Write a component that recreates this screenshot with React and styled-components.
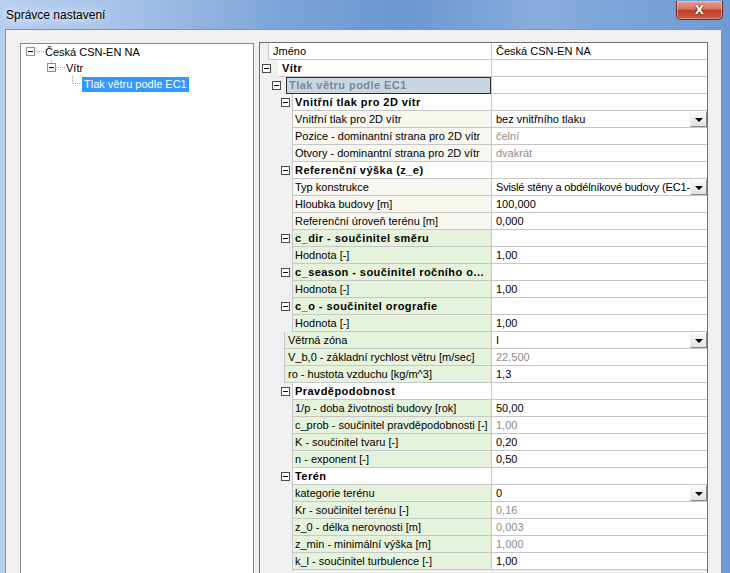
import React from "react";
import styled, { createGlobalStyle } from "styled-components";

const GlobalStyle = createGlobalStyle`
  html, body {
    margin: 0;
    padding: 0;
    overflow: hidden;
  }
  body {
    font-family: "Liberation Sans", Arial, sans-serif;
    font-size: 11px;
    color: #000;
  }
`;

const LINE = "#c6c6c6";
const TONES = {
  white: "#ffffff",
  cream: "#f8f8f0",
  green: "#e6f3dc",
};

const Frame = styled.div`
  width: 730px;
  height: 573px;
  display: flex;
  flex-direction: column;
  overflow: hidden;
  background: linear-gradient(
    90deg,
    #b7cfee 0%,
    #a8c3e8 16%,
    #7ea5d8 38%,
    #6c97d0 55%,
    #88acdc 74%,
    #6f9ad2 100%
  );
`;

const TitleBar = styled.div`
  height: 29px;
  flex: none;
  display: flex;
  align-items: flex-start;
`;

const Title = styled.div`
  margin: 8px 0 0 6px;
  font-size: 12px;
  line-height: 14px;
  text-shadow: 0 0 6px #fff, 0 0 12px rgba(255, 255, 255, 0.9);
`;

const CloseButton = styled.div`
  margin: 1px 7px 0 auto;
  width: 47px;
  height: 19px;
  box-sizing: border-box;
  display: flex;
  align-items: center;
  justify-content: center;
  border: 1px solid #6e2b22;
  border-top: none;
  border-radius: 0 0 5px 5px;
  background: linear-gradient(#e7a394 0%, #d7735f 45%, #c13f27 52%, #cf5a40 100%);
  box-shadow: inset 0 0 0 1px rgba(255, 255, 255, 0.35);
  color: #fff;
  font-family: "DejaVu Sans", sans-serif;
  font-weight: 700;
  font-size: 12px;
  text-shadow: 0 0 2px #5a1208, 0 0 1px #5a1208;
`;

const Client = styled.div`
  flex: 1;
  min-height: 0;
  display: flex;
  align-items: flex-start;
  gap: 5px;
  margin: 0 8px 0 5px;
  padding: 12px 13px 0 14px;
  background: #f0f0f0;
  border: 1px solid #7f93b0;
  border-bottom: none;
`;

const TreePanel = styled.div`
  width: 234px;
  height: 560px;
  flex: none;
  box-sizing: border-box;
  margin-top: 1px;
  background: #fff;
  border: 1px solid #828790;
`;

const TreeRow = styled.div`
  display: flex;
  align-items: center;
  height: 16px;
  padding-left: ${(p) => p.$indent}px;
`;

const TreeLines = styled.svg`
  flex: none;
  display: block;
`;

const TreeLabel = styled.span`
  white-space: nowrap;
  line-height: 15px;
  padding: 0 2px;
  margin-left: ${(p) => (p.$selected ? 0 : -2)}px;
  background: ${(p) => (p.$selected ? "#3399ff" : "transparent")};
  color: ${(p) => (p.$selected ? "#fff" : "#000")};
`;

const Grid = styled.div`
  width: 449px;
  height: 560px;
  flex: none;
  box-sizing: border-box;
  background: #f0f0f0;
  border: 1px solid #6f6f6f;
`;

const Row = styled.div`
  display: flex;
  height: 17px;
`;

const Gutter = styled.div`
  flex: none;
  width: ${(p) => p.$width}px;
  box-sizing: border-box;
  display: flex;
  align-items: center;
  padding-left: ${(p) => p.$box}px;
  background: #f0f0f0;
`;

const Expander = styled.span`
  position: relative;
  width: 9px;
  height: 9px;
  box-sizing: border-box;
  border: 1px solid #4a4a4a;
  background: #fff;
  margin-top: -1px;
  &::after {
    content: "";
    position: absolute;
    left: 1px;
    top: 3px;
    width: 5px;
    height: 1px;
    background: #000;
  }
`;

const LabelCell = styled.div`
  flex: 1;
  min-width: 0;
  box-sizing: border-box;
  padding-left: ${(p) => p.$pad}px;
  line-height: 16px;
  white-space: nowrap;
  overflow: hidden;
  background: ${(p) => TONES[p.$tone]};
  border-left: 1px solid ${(p) => (p.$edge ? LINE : "transparent")};
  border-bottom: 1px solid ${LINE};
  font-weight: ${(p) => (p.$bold ? 700 : 400)};
  letter-spacing: ${(p) => (p.$bold ? "0.45px" : "0")};
`;

const SelectedCell = styled(LabelCell)`
  background: #c9d6e1;
  color: #7b8895;
  border: 1px solid #2e2e2e;
  line-height: 15px;
`;

const ValueCell = styled.div`
  flex: none;
  width: 216px;
  box-sizing: border-box;
  display: flex;
  align-items: center;
  background: #fff;
  border-left: 1px solid ${LINE};
  border-bottom: 1px solid ${LINE};
  padding-left: 4px;
  color: ${(p) => (p.$muted ? "#8c8c8c" : "#000")};
`;

const ValueText = styled.span`
  flex: 1;
  min-width: 0;
  overflow: hidden;
  white-space: nowrap;
  line-height: 16px;
  letter-spacing: ${(p) => (p.$tight ? "-0.17px" : "0")};
`;

const ComboButton = styled.span`
  flex: none;
  width: 17px;
  height: 16px;
  box-sizing: border-box;
  display: flex;
  align-items: center;
  justify-content: center;
  background: linear-gradient(#fbfbfb, #e2e2e2);
  border: 1px solid;
  border-color: #ffffff #8a8a8a #8a8a8a #f0f0f0;
  &::after {
    content: "";
    border-left: 4px solid transparent;
    border-right: 4px solid transparent;
    border-top: 4px solid #000;
    margin-top: 1px;
  }
`;

// gutter width, expander offset and label padding per kind of row
const KINDS = {
  name: { gutter: 8, pad: 4, edge: true },
  top: { gutter: 18, box: 2, pad: 3, bold: true },
  group: { gutter: 32, box: 21, pad: 2, bold: true, edge: true },
  leaf: { gutter: 32, pad: 2, edge: true },
  item: { gutter: 24, pad: 3, edge: true },
};

const rows = [
  { kind: "name", label: "Jméno", value: "Česká CSN-EN NA", tone: "white" },
  { kind: "top", label: "Vítr", tone: "white" },
  { kind: "selected", label: "Tlak větru podle EC1" },
  { kind: "group", label: "Vnitřní tlak pro 2D vítr", tone: "white" },
  { kind: "leaf", label: "Vnitřní tlak pro 2D vítr", value: "bez vnitřního tlaku", combo: true, tone: "cream" },
  { kind: "leaf", label: "Pozice - dominantní strana pro 2D vítr", value: "čelní", muted: true, tone: "cream" },
  { kind: "leaf", label: "Otvory - dominantní strana pro 2D vítr", value: "dvakrát", muted: true, tone: "cream" },
  { kind: "group", label: "Referenční výška (z_e)", tone: "white" },
  { kind: "leaf", label: "Typ konstrukce", value: "Svislé stěny a obdélníkové budovy (EC1-", combo: true, tight: true, tone: "cream" },
  { kind: "leaf", label: "Hloubka budovy [m]", value: "100,000", tone: "cream" },
  { kind: "leaf", label: "Referenční úroveň terénu [m]", value: "0,000", tone: "cream" },
  { kind: "group", label: "c_dir - součinitel směru", tone: "green" },
  { kind: "leaf", label: "Hodnota [-]", value: "1,00", tone: "green" },
  { kind: "group", label: "c_season - součinitel ročního o...", tone: "green" },
  { kind: "leaf", label: "Hodnota [-]", value: "1,00", tone: "green" },
  { kind: "group", label: "c_o - součinitel orografie", tone: "green" },
  { kind: "leaf", label: "Hodnota [-]", value: "1,00", tone: "green" },
  { kind: "item", label: "Větrná zóna", value: "I", combo: true, tone: "green" },
  { kind: "item", label: "V_b,0 - základní rychlost větru [m/sec]", value: "22,500", muted: true, tone: "green" },
  { kind: "item", label: "ro - hustota vzduchu [kg/m^3]", value: "1,3", tone: "green" },
  { kind: "group", label: "Pravděpodobnost", tone: "white" },
  { kind: "leaf", label: "1/p - doba životnosti budovy [rok]", value: "50,00", tone: "green" },
  { kind: "leaf", label: "c_prob - součinitel pravděpodobnosti [-]", value: "1,00", muted: true, tone: "green" },
  { kind: "leaf", label: "K - součinitel tvaru [-]", value: "0,20", tone: "green" },
  { kind: "leaf", label: "n - exponent [-]", value: "0,50", tone: "green" },
  { kind: "group", label: "Terén", tone: "white" },
  { kind: "leaf", label: "kategorie terénu", value: "0", combo: true, tone: "green" },
  { kind: "leaf", label: "Kr - součinitel terénu [-]", value: "0,16", muted: true, tone: "green" },
  { kind: "leaf", label: "z_0 - délka nerovnosti [m]", value: "0,003", muted: true, tone: "green" },
  { kind: "leaf", label: "z_min - minimální výška [m]", value: "1,000", muted: true, tone: "green" },
  { kind: "leaf", label: "k_l - součinitel turbulence [-]", value: "1,00", tone: "green" },
];

const Value = ({ row }) => (
  <ValueCell $muted={row.muted}>
    <ValueText $tight={row.tight}>{row.value}</ValueText>
    {row.combo && <ComboButton />}
  </ValueCell>
);

const PropertyRow = ({ row }) => {
  if (row.kind === "selected") {
    return (
      <Row>
        <Gutter $width={26} $box={12}>
          <Expander />
        </Gutter>
        <SelectedCell $pad={2} $bold>
          {row.label}
        </SelectedCell>
        <Value row={row} />
      </Row>
    );
  }
  const k = KINDS[row.kind];
  return (
    <Row>
      <Gutter $width={k.gutter} $box={k.box || 0}>
        {k.box !== undefined && <Expander />}
      </Gutter>
      <LabelCell $pad={k.pad} $tone={row.tone} $bold={k.bold} $edge={k.edge}>
        {row.label}
      </LabelCell>
      <Value row={row} />
    </Row>
  );
};

const dot = "1 1";

const Tree = () => (
  <TreePanel>
    <TreeRow $indent={5}>
      <TreeLines width="19" height="16">
        <rect x="0.5" y="3.5" width="8" height="8" fill="#fff" stroke="#8f8f8f" />
        <line x1="2" y1="7.5" x2="7" y2="7.5" stroke="#000" />
        <line x1="9" y1="7.5" x2="18" y2="7.5" stroke="#a0a0a0" strokeDasharray={dot} />
      </TreeLines>
      <TreeLabel>Česká CSN-EN NA</TreeLabel>
    </TreeRow>
    <TreeRow $indent={26}>
      <TreeLines width="19" height="16">
        <line x1="4.5" y1="0" x2="4.5" y2="3" stroke="#a0a0a0" strokeDasharray={dot} />
        <rect x="0.5" y="3.5" width="8" height="8" fill="#fff" stroke="#8f8f8f" />
        <line x1="2" y1="7.5" x2="7" y2="7.5" stroke="#000" />
        <line x1="9" y1="7.5" x2="18" y2="7.5" stroke="#a0a0a0" strokeDasharray={dot} />
      </TreeLines>
      <TreeLabel>Vítr</TreeLabel>
    </TreeRow>
    <TreeRow $indent={51}>
      <TreeLines width="10" height="16">
        <line x1="0.5" y1="0" x2="0.5" y2="8" stroke="#a0a0a0" strokeDasharray={dot} />
        <line x1="1" y1="7.5" x2="9" y2="7.5" stroke="#a0a0a0" strokeDasharray={dot} />
      </TreeLines>
      <TreeLabel $selected>Tlak větru podle EC1</TreeLabel>
    </TreeRow>
  </TreePanel>
);

export default function App() {
  return (
    <Frame>
      <GlobalStyle />
      <TitleBar>
        <Title>Správce nastavení</Title>
        <CloseButton>X</CloseButton>
      </TitleBar>
      <Client>
        <Tree />
        <Grid>
          {rows.map((row, idx) => (
            <PropertyRow key={idx} row={row} />
          ))}
        </Grid>
      </Client>
    </Frame>
  );
}
